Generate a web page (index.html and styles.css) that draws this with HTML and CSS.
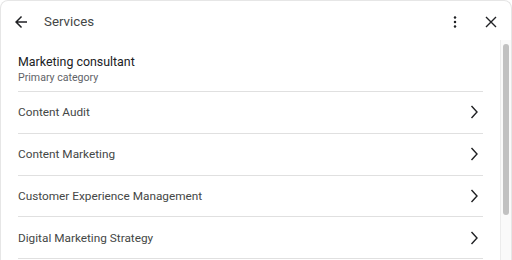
FILE: index.html
```html
<!DOCTYPE html>
<html lang="en">
<head>
    <meta charset="UTF-8">
    <meta name="viewport" content="width=device-width, initial-scale=1.0">
    <title>Services</title>
    <link rel="stylesheet" href="styles.css">
</head>
<body>
    <div class="panel">
        <div class="header">
            <button class="icon-btn back-btn" aria-label="Back">
                <svg viewBox="0 0 24 24" width="18" height="18"><path d="M20 11H7.83l5.59-5.59L12 4l-8 8 8 8 1.41-1.41L7.83 13H20v-2z"/></svg>
            </button>
            <span class="title">Services</span>
            <button class="icon-btn more-btn" aria-label="More">
                <svg viewBox="0 0 4 12" width="4" height="12"><circle cx="2" cy="1.5" r="1.25"/><circle cx="2" cy="6" r="1.25"/><circle cx="2" cy="10.5" r="1.25"/></svg>
            </button>
            <button class="icon-btn close-btn" aria-label="Close">
                <svg viewBox="0 0 12 12" width="12" height="12"><path d="M1 1L11 11M11 1L1 11"/></svg>
            </button>
        </div>
        <div class="body">
            <div class="content">
                <div class="category">
                    <div class="category-name">Marketing consultant</div>
                    <div class="category-label">Primary category</div>
                </div>
                <div class="service-row">
                    <span>Content Audit</span>
                    <svg class="chevron" viewBox="0 0 8 14" width="8" height="14"><polyline points="1.5,1 7,7 1.5,13"/></svg>
                </div>
                <div class="service-row">
                    <span>Content Marketing</span>
                    <svg class="chevron" viewBox="0 0 8 14" width="8" height="14"><polyline points="1.5,1 7,7 1.5,13"/></svg>
                </div>
                <div class="service-row">
                    <span>Customer Experience Management</span>
                    <svg class="chevron" viewBox="0 0 8 14" width="8" height="14"><polyline points="1.5,1 7,7 1.5,13"/></svg>
                </div>
                <div class="service-row">
                    <span>Digital Marketing Strategy</span>
                    <svg class="chevron" viewBox="0 0 8 14" width="8" height="14"><polyline points="1.5,1 7,7 1.5,13"/></svg>
                </div>
            </div>
            <div class="scroll-track">
                <div class="scroll-thumb"></div>
            </div>
        </div>
    </div>
</body>
</html>
```

FILE: styles.css
```css
body {
    margin: 0;
    background-color: #ffffff;
    font-family: Roboto, 'Liberation Sans', sans-serif;
    overflow: hidden;
}

.panel {
    box-sizing: border-box;
    width: 512px;
    height: 260px;
    border: 1px solid #e6e6e6;
    border-bottom: none;
    border-radius: 8px 8px 0 0;
    display: flex;
    flex-direction: column;
    overflow: hidden;
}

.header {
    height: 39px;
    flex-shrink: 0;
    display: flex;
    align-items: center;
    padding-left: 11px;
    padding-right: 14px;
}

.icon-btn {
    background: none;
    border: none;
    padding: 0;
    display: flex;
    align-items: center;
    justify-content: center;
    cursor: pointer;
}

.icon-btn svg {
    fill: #202124;
}

.back-btn {
    width: 18px;
    height: 18px;
    margin-top: 2px;
}

.title {
    margin-left: 14px;
    font-size: 13.3px;
    color: #444746;
    flex: 1;
    margin-top: 1px;
}

.more-btn {
    width: 4px;
    height: 12px;
    margin-top: 2px;
}

.close-btn {
    width: 12px;
    height: 12px;
    margin-left: 28px;
    margin-top: 2px;
}

.close-btn svg {
    fill: none;
    stroke: #202124;
    stroke-width: 1.4;
}

.body {
    flex: 1;
    display: flex;
    min-height: 0;
}

.content {
    flex: 1;
    padding: 0 17px;
}

.category {
    padding: 13px 0 6px;
    border-bottom: 1px solid #e0e0e0;
}

.category-name {
    font-size: 12.4px;
    line-height: 17px;
    color: #202124;
}

.category-label {
    font-size: 10.6px;
    line-height: 15px;
    color: #5f6368;
}

.service-row {
    height: 40.75px;
    border-bottom: 1px solid #e0e0e0;
    display: flex;
    align-items: center;
    justify-content: space-between;
    font-size: 11.8px;
    color: #444746;
}

.chevron {
    fill: none;
    stroke: #202124;
    stroke-width: 1.4;
    margin-right: 5px;
}

.scroll-track {
    width: 11px;
    border-left: 1px solid #ececec;
    background-color: #fafafa;
    padding: 4px 2px 0 2px;
    box-sizing: border-box;
}

.scroll-thumb {
    height: 171px;
    background-color: #c1c1c1;
    border-radius: 3px;
}
```
